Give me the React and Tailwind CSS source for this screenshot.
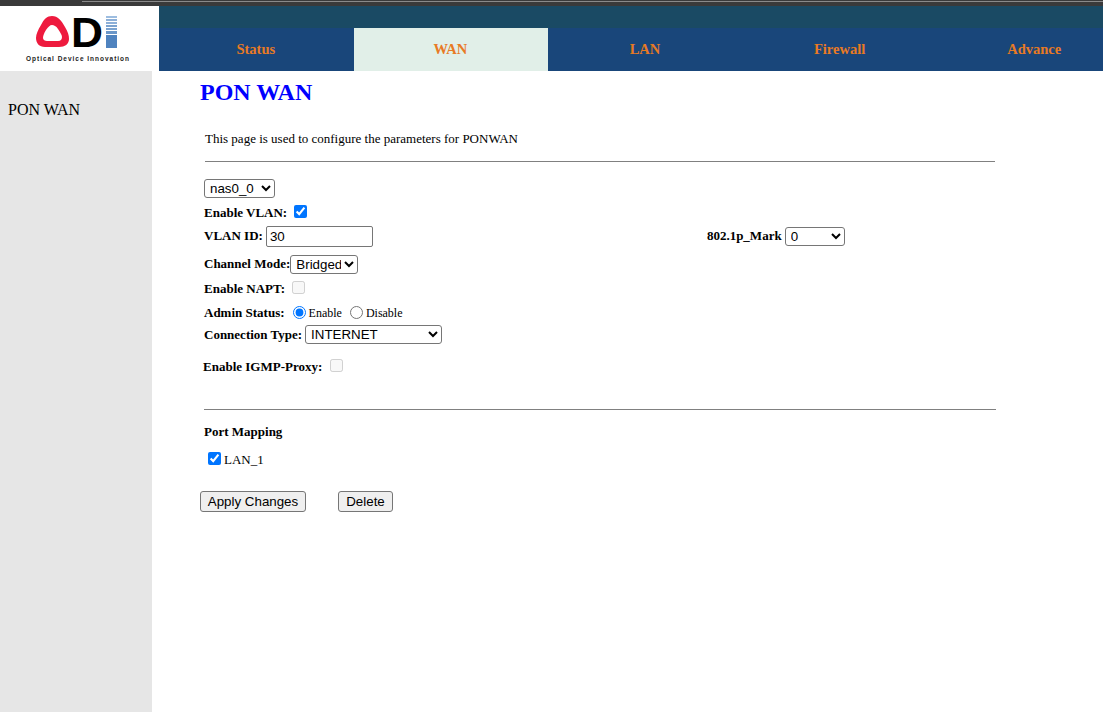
const tabs = ['Status', 'WAN', 'LAN', 'Firewall', 'Advance']

function Logo() {
  return (
    <svg width="159" height="65" viewBox="0 0 159 65">
      <path d="M52 10 C58 10 61 14 65 21 C68 26 69 29 69 33 C69 38 65 41 59 41 C55 41 49 41 45 41 C39 41 36 37 36 32 C36 28 38 24 41 19 C44 13 47 10 52 10 Z M52 19 C50 19 48 21 46 24 C44 27 43 30 43 32 C43 34 45 35 47 35 C50 35 54 35 58 35 C61 35 62 33 62 31 C62 29 60 26 58 23 C56 20 54 19 52 19 Z" fill="#ee1a3e" fillRule="evenodd" />
      <text x="71" y="41" fontFamily="Liberation Sans, sans-serif" fontWeight="700" fontSize="43" textLength="32" lengthAdjust="spacingAndGlyphs" fill="#000">D</text>
      <rect x="106" y="10" width="11" height="2" fill="#9dbde0" />
      <rect x="106" y="13" width="11" height="2" fill="#8db0d8" />
      <rect x="106" y="16" width="11" height="2" fill="#8db0d8" />
      <rect x="106" y="19" width="11" height="2" fill="#7ba3d0" />
      <rect x="106" y="22" width="11" height="2" fill="#7ba3d0" />
      <rect x="106" y="25" width="11" height="3" fill="#6a97c9" />
      <rect x="106" y="29" width="11" height="13" fill="#4f83bf" />
      <text x="26" y="55" fontFamily="Liberation Sans, sans-serif" fontWeight="700" fontSize="6.5" textLength="103" fill="#222">Optical Device Innovation</text>
    </svg>
  )
}

function Label({ children, className = '' }) {
  return <span className={'text-[13px] font-bold ' + className}>{children}</span>
}

const sans = "font-['Liberation_Sans',sans-serif]"
const selectCls = sans + ' text-[13.33px] border border-[#767676] rounded-[3px] bg-white text-black h-[19px] pl-[1px]'
const buttonCls = sans + ' text-[13.33px] h-[21px] border border-[#767676] rounded-[3px] bg-[#efefef] text-black'
const checkCls = 'w-[13px] h-[13px] mb-[3px] accent-[#0075ff]'

export default function App() {
  return (
    <div className="h-[712px] overflow-hidden bg-white text-black font-['Liberation_Serif',serif]">
      <div className="h-[6px] bg-[#3a3a3a] pt-[1px] pl-[82px]">
        <div className="h-[1px] bg-[#8a8a8a]"></div>
      </div>

      <div className="flex h-[65px]">
        <div className="w-[159px] shrink-0 bg-white">
          <Logo />
        </div>
        <div className="flex-1 min-w-0 overflow-hidden">
          <div className="h-[22px] bg-[#1a4a64]"></div>
          <div className="flex h-[43px] bg-[#19467a]">
            {tabs.map(t => (
              <div
                key={t}
                className={'w-[194.6px] shrink-0 flex items-center justify-center pt-[1px] pr-[1px] text-[14.5px] font-bold text-[#e87a24] ' + (t === 'WAN' ? 'bg-[#e1efe8]' : '')}
              >
                {t}
              </div>
            ))}
          </div>
        </div>
      </div>

      <div className="flex h-[641px]">
        <aside className="w-[152px] shrink-0 bg-[#e6e6e6] pl-2 pt-[30px]">
          <div className="text-base leading-[18px]">PON WAN</div>
        </aside>

        <main className="flex-1 pl-[48px]">
          <h1 className="text-2xl font-bold text-[#0000ff] leading-[28px] mt-[7px]">PON WAN</h1>
          <p className="text-[13px] leading-[14px] mt-[26px] ml-[5px]">This page is used to configure the parameters for PONWAN</p>
          <hr className="border-[#808080] w-[790px] ml-[5px] mt-[15px]" />

          <div className="ml-[4px] mt-[17px] flex h-[19px]">
            <select className={selectCls + ' w-[71px]'} defaultValue="nas0_0">
              <option>nas0_0</option>
            </select>
          </div>

          <div className="ml-[4px] mt-[8px] flex items-center h-[14px]">
            <Label>Enable VLAN:</Label>
            <input type="checkbox" defaultChecked className={'ml-[7px] ' + checkCls} />
          </div>

          <div className="ml-[4px] mt-[5px] flex items-center h-[22px]">
            <Label>VLAN ID:</Label>
            <input type="text" defaultValue="30" className={sans + ' ml-[3px] w-[107px] h-[21px] border border-[#767676] rounded-[2px] px-[3px] text-[13.33px]'} />
            <Label className="ml-[334px]">802.1p_Mark</Label>
            <select className={selectCls + ' ml-[3px] w-[60px]'} defaultValue="0">
              <option>0</option>
            </select>
          </div>

          <div className="ml-[4px] mt-[7px] flex items-center h-[20px]">
            <Label>Channel Mode:</Label>
            <select className={selectCls + ' w-[68px]'} defaultValue="Bridged">
              <option>Bridged</option>
            </select>
          </div>

          <div className="ml-[4px] mt-[7px] flex items-center h-[16px]">
            <Label>Enable NAPT:</Label>
            <input type="checkbox" disabled className={'ml-[7px] ' + checkCls} />
          </div>

          <div className="ml-[4px] mt-[7px] flex items-center h-[18px]">
            <Label>Admin Status:</Label>
            <input type="radio" name="admin" defaultChecked className="ml-[8px] w-[13px] h-[13px] mb-[2px] accent-[#0075ff]" />
            <span className="text-xs ml-[3px]">Enable</span>
            <input type="radio" name="admin" className="ml-[8px] w-[13px] h-[13px] mb-[2px]" />
            <span className="text-xs ml-[3px]">Disable</span>
          </div>

          <div className="ml-[4px] mt-[3px] flex items-center h-[19px]">
            <Label>Connection Type:</Label>
            <select className={selectCls + ' ml-[3px] w-[137px]'} defaultValue="INTERNET">
              <option>INTERNET</option>
            </select>
          </div>

          <div className="ml-[3px] mt-[15px] flex items-center h-[16px]">
            <Label>Enable IGMP-Proxy:</Label>
            <input type="checkbox" disabled className={'ml-[8px] ' + checkCls} />
          </div>

          <hr className="border-[#808080] w-[792px] ml-[4px] mt-[34px]" />

          <div className="ml-[4px] mt-[15px] h-[14px] flex items-center">
            <Label>Port Mapping</Label>
          </div>

          <div className="ml-[8px] mt-[13px] flex items-center h-[16px]">
            <input type="checkbox" defaultChecked className={checkCls} />
            <span className="text-[13px] ml-[3px]">LAN_1</span>
          </div>

          <div className="mt-[23px] flex gap-[32px]">
            <button className={buttonCls + ' w-[106px]'}>Apply Changes</button>
            <button className={buttonCls + ' w-[55px]'}>Delete</button>
          </div>
        </main>
      </div>
    </div>
  )
}
